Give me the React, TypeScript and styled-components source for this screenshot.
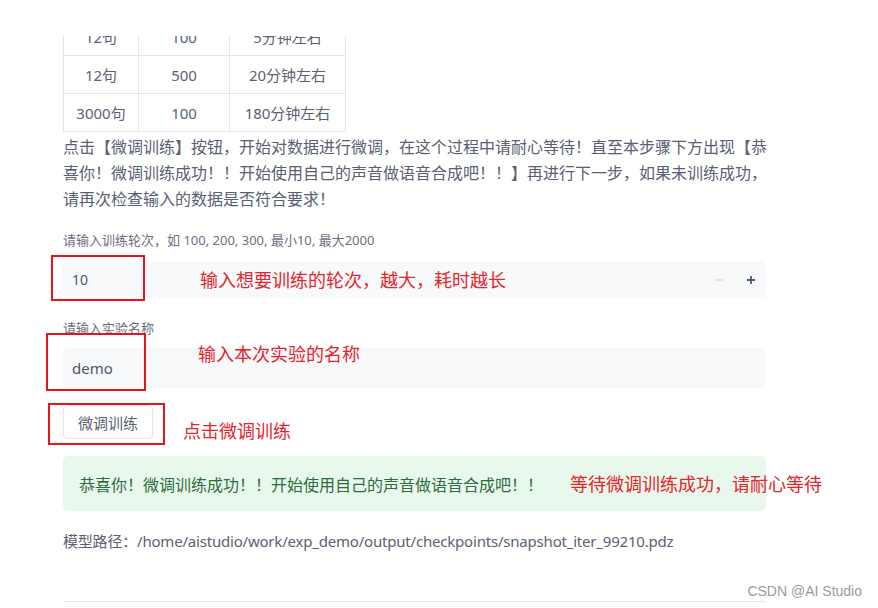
import { createGlobalStyle, styled } from 'styled-components';

const GlobalStyle = createGlobalStyle`
  html, body {
    margin: 0;
    padding: 0;
    background: #ffffff;
  }
  body {
    font-family: "Noto Sans", "Noto Sans CJK SC", sans-serif;
  }
`;

const Page = styled.div`
  position: relative;
  width: 878px;
  height: 608px;
  overflow: hidden;
  padding: 36px 0 0 63px;
  box-sizing: border-box;
`;

const Column = styled.div`
  width: 703px;
  display: flex;
  flex-direction: column;
`;

const TableClip = styled.div`
  height: 98px;
  overflow: hidden;
`;

const Table = styled.table`
  margin-top: -19px;
  border-collapse: collapse;
  font-size: 15px;
  color: #5b6172;

  td {
    height: 37px;
    padding: 0;
    text-align: center;
    border: 1px solid #e3e5ea;
  }
`;

const Paragraph = styled.p`
  margin: 0;
  font-size: 16px;
  line-height: 26px;
  color: #596074;

  span {
    display: block;
    white-space: nowrap;
  }
`;

const Label = styled.div`
  margin-top: ${(p: { $top: number }) => p.$top}px;
  font-size: 13px;
  line-height: 16px;
  color: #6b7080;
`;

const Field = styled.div<{ $h: number; $top: number }>`
  margin-top: ${(p) => p.$top}px;
  height: ${(p) => p.$h}px;
  background: #f8f9fb;
  border-radius: 4px;
  display: flex;
  align-items: center;
  padding: 0 10px 0 9px;
  font-size: 15px;
  color: #4f5566;
`;

const FieldValue = styled.span`
  flex: 1;
`;

const Stepper = styled.div`
  display: flex;
  align-items: center;
  gap: 22px;
`;

const StepIcon = styled.svg`
  width: 10px;
  height: 10px;
  display: block;
`;

const Button = styled.button`
  margin-top: 17px;
  align-self: flex-start;
  width: 90px;
  height: 34px;
  border: 1px solid #e2e4e9;
  border-radius: 4px;
  background: #ffffff;
  font-family: inherit;
  font-size: 15px;
  color: #5b6172;
  padding: 0;
`;

const SuccessBox = styled.div`
  margin-top: 17px;
  height: 55px;
  border-radius: 5px;
  background: #e8f8ed;
  display: flex;
  align-items: center;
  padding-left: 16px;
  font-size: 16px;
  color: #2f6b3c;
`;

const PathText = styled.div`
  margin-top: 19px;
  font-size: 15px;
  line-height: 22px;
  letter-spacing: -0.2px;
  color: #5b6172;
`;

const Divider = styled.div`
  margin-top: 49px;
  height: 1px;
  background: #e2e4e9;
`;

const RedBox = styled.div<{ $x: number; $y: number; $w: number; $h: number }>`
  position: absolute;
  left: ${(p) => p.$x}px;
  top: ${(p) => p.$y}px;
  width: ${(p) => p.$w}px;
  height: ${(p) => p.$h}px;
  border: 2px solid #e5141c;
  box-sizing: border-box;
  pointer-events: none;
`;

const Note = styled.div<{ $x: number; $y: number }>`
  position: absolute;
  left: ${(p) => p.$x}px;
  top: ${(p) => p.$y}px;
  font-size: 18px;
  line-height: 24px;
  color: #e5242b;
  white-space: nowrap;
`;

const Watermark = styled.div`
  position: absolute;
  right: 16px;
  top: 583px;
  font-family: "Liberation Sans", Arial, sans-serif;
  font-size: 14px;
  color: #9a9a9a;
`;

const rows = [
  ['12句', '100', '5分钟左右'],
  ['12句', '500', '20分钟左右'],
  ['3000句', '100', '180分钟左右'],
];

export default function App() {
  return (
    <>
      <GlobalStyle />
      <Page>
        <Column>
          <TableClip>
            <Table>
              <colgroup>
                <col style={{ width: 75 }} />
                <col style={{ width: 91 }} />
                <col style={{ width: 116 }} />
              </colgroup>
              <tbody>
                {rows.map((r, i) => (
                  <tr key={i}>
                    {r.map((c, j) => (
                      <td key={j}>{c}</td>
                    ))}
                  </tr>
                ))}
              </tbody>
            </Table>
          </TableClip>
          <Paragraph>
            <span>点击【微调训练】按钮，开始对数据进行微调，在这个过程中请耐心等待！直至本步骤下方出现【恭</span>
            <span>喜你！微调训练成功！！开始使用自己的声音做语音合成吧！！】再进行下一步，如果未训练成功，</span>
            <span>请再次检查输入的数据是否符合要求！</span>
          </Paragraph>
          <Label $top={20}>请输入训练轮次，如 100, 200, 300, 最小10, 最大2000</Label>
          <Field $h={37} $top={13}>
            <FieldValue style={{ fontSize: 14 }}>10</FieldValue>
            <Stepper>
              <StepIcon viewBox="0 0 10 10">
                <path d="M1 5h8" stroke="#d3d6dc" strokeWidth="1.4" />
              </StepIcon>
              <StepIcon viewBox="0 0 10 10">
                <path d="M1 5h8M5 1v8" stroke="#4f5872" strokeWidth="1.8" />
              </StepIcon>
            </Stepper>
          </Field>
          <Label $top={22}>请输入实验名称</Label>
          <Field $h={40} $top={12}>
            <FieldValue>demo</FieldValue>
          </Field>
          <Button type="button">微调训练</Button>
          <SuccessBox>恭喜你！微调训练成功！！开始使用自己的声音做语音合成吧！！</SuccessBox>
          <PathText>模型路径：/home/aistudio/work/exp_demo/output/checkpoints/snapshot_iter_99210.pdz</PathText>
          <Divider />
        </Column>

        <RedBox $x={51} $y={255} $w={94} $h={46} />
        <RedBox $x={46} $y={333} $w={100} $h={58} />
        <RedBox $x={48} $y={403} $w={117} $h={42} />
        <Note $x={200} $y={268}>输入想要训练的轮次，越大，耗时越长</Note>
        <Note $x={198} $y={342}>输入本次实验的名称</Note>
        <Note $x={183} $y={419}>点击微调训练</Note>
        <Note $x={570} $y={472}>等待微调训练成功，请耐心等待</Note>
        <Watermark>CSDN @AI Studio</Watermark>
      </Page>
    </>
  );
}
